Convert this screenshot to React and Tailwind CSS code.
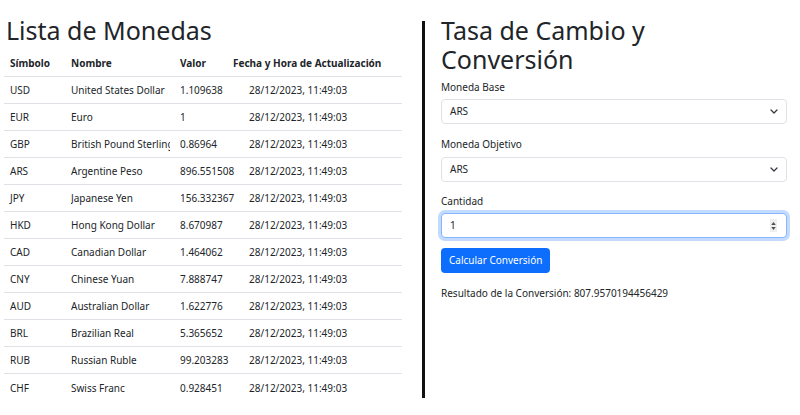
import React from 'react';

const monedas = [
  { simbolo: 'USD', nombre: 'United States Dollar', valor: '1.109638' },
  { simbolo: 'EUR', nombre: 'Euro', valor: '1' },
  { simbolo: 'GBP', nombre: 'British Pound Sterling', valor: '0.86964' },
  { simbolo: 'ARS', nombre: 'Argentine Peso', valor: '896.551508' },
  { simbolo: 'JPY', nombre: 'Japanese Yen', valor: '156.332367' },
  { simbolo: 'HKD', nombre: 'Hong Kong Dollar', valor: '8.670987' },
  { simbolo: 'CAD', nombre: 'Canadian Dollar', valor: '1.464062' },
  { simbolo: 'CNY', nombre: 'Chinese Yuan', valor: '7.888747' },
  { simbolo: 'AUD', nombre: 'Australian Dollar', valor: '1.622776' },
  { simbolo: 'BRL', nombre: 'Brazilian Real', valor: '5.365652' },
  { simbolo: 'RUB', nombre: 'Russian Ruble', valor: '99.203283' },
  { simbolo: 'CHF', nombre: 'Swiss Franc', valor: '0.928451' },
];

const fecha = '28/12/2023, 11:49:03';

const Chevron = () => (
  <svg width="8" height="5" viewBox="0 0 8 5" fill="none">
    <path d="M1 1l3 3 3-3" stroke="#343a40" strokeWidth="1.3" strokeLinecap="round" strokeLinejoin="round" />
  </svg>
);

const SelectBox = ({ value }) => (
  <div className="flex items-center justify-between h-[25px] border border-[#dee2e6] rounded-[4px] bg-white pl-[8px] pr-[8px]">
    <span>{value}</span>
    <Chevron />
  </div>
);

const App = () => {
  return (
    <div
      className="flex w-[800px] h-[415px] bg-white text-[#212529] text-[10px] leading-[15px] overflow-hidden"
      style={{ fontFamily: '"Noto Sans", "Open Sans", sans-serif' }}
    >
      {/* Lista de monedas */}
      <div className="w-[422px] pl-[4px] pt-[13px]">
        <h2 className="text-[25px] leading-[34px] pl-[2px] mb-[3px]">Lista de Monedas</h2>
        <div className="w-[398px]">
          <div className="flex items-center h-[27px] pt-[1px] border-b border-[#dee2e6] font-bold">
            <div className="w-[61px] pl-[6px]">Símbolo</div>
            <div className="w-[109px] pl-[6px]">Nombre</div>
            <div className="w-[53px] pl-[6px]">Valor</div>
            <div className="pl-[6px] whitespace-nowrap">Fecha y Hora de Actualización</div>
          </div>
          {monedas.map((m, i) => (
            <div
              key={m.simbolo}
              className={`flex items-center h-[27px] pt-[1px] ${i < monedas.length - 1 ? 'border-b border-[#dee2e6]' : ''}`}
            >
              <div className="w-[61px] pl-[6px]">{m.simbolo}</div>
              <div className="w-[109px] pl-[6px]">
                <div className="w-[99px] overflow-hidden whitespace-nowrap">{m.nombre}</div>
              </div>
              <div className="w-[53px] pl-[6px] whitespace-nowrap">{m.valor}</div>
              <div className="pl-[22px] whitespace-nowrap">{fecha}</div>
            </div>
          ))}
        </div>
      </div>

      {/* Tasa de cambio y conversion */}
      <div className="mt-[21px] h-[377px] border-l-[3px] border-[#111] pl-[16px] w-[365px]">
        <h2 className="text-[25px] leading-[29px] -mt-[5px] mb-[6px]">
          Tasa de Cambio y<br />Conversión
        </h2>
        <div className="mb-[4px]">Moneda Base</div>
        <SelectBox value="ARS" />
        <div className="mt-[13px] mb-[5px]">Moneda Objetivo</div>
        <SelectBox value="ARS" />
        <div className="mt-[12px] mb-[4px]">Cantidad</div>
        <div className="flex items-center justify-between h-[25px] border border-[#86b7fe] rounded-[4px] bg-white pl-[8px] pr-[9px] shadow-[0_0_0_3px_rgba(13,110,253,0.25)]">
          <span>1</span>
          <div className="flex flex-col items-center justify-center w-[7px] h-[13px] bg-[#efefef] gap-[2px]">
            <svg width="5" height="3" viewBox="0 0 6 4"><path d="M3 0L6 4H0z" fill="#505050" /></svg>
            <svg width="5" height="3" viewBox="0 0 6 4"><path d="M0 0h6L3 4z" fill="#505050" /></svg>
          </div>
        </div>
        <button className="block mt-[10px] h-[25px] px-[8px] rounded-[4px] bg-[#0d6efd] text-white">
          Calcular Conversión
        </button>
        <div className="mt-[13px]">Resultado de la Conversión: 807.9570194456429</div>
      </div>
    </div>
  );
};

export default App;
